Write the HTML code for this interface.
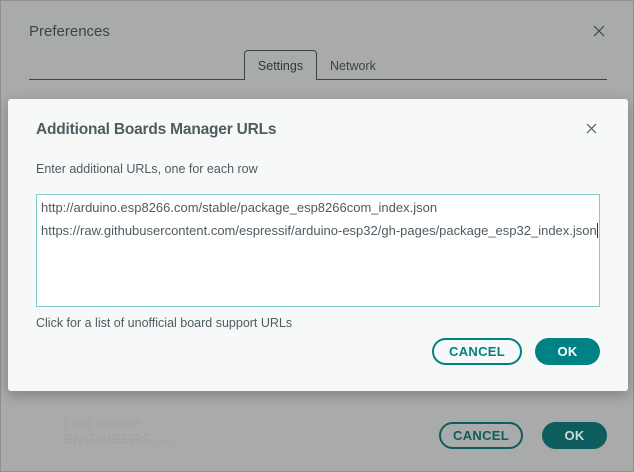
<!DOCTYPE html>
<html><head><style>
*{margin:0;padding:0;box-sizing:border-box}
body{width:634px;height:472px;background:#a9abaa;font-family:"Liberation Sans",sans-serif;position:relative;overflow:hidden;border:1px solid #8e8f8f}
.a{position:absolute}
.btn{position:absolute;border-radius:14px;font-weight:bold;font-size:13px;display:flex;align-items:center;justify-content:center;letter-spacing:.3px}
</style></head><body>
<div class="a" style="left:28px;top:22px;font-size:15px;color:#3b4546">Preferences</div>
<svg class="a" style="left:592px;top:24px" width="12" height="12"><path d="M1 1L11 11M11 1L1 11" stroke="#3b4546" stroke-width="1.2"/></svg>
<div class="a" style="left:28px;top:78px;width:578px;height:1px;background:#3b4546"></div>
<div class="a" style="left:243px;top:49px;width:73px;height:30px;border:1px solid #3b4546;border-bottom:none;border-radius:4px 4px 0 0;background:#a9abaa;font-size:12.5px;color:#2f3a3b;text-align:center;padding-top:8px">Settings</div>
<div class="a" style="left:329px;top:58px;font-size:12.5px;color:#3b4546">Network</div>
<div class="a" style="left:62px;top:415px;font-size:15px;color:#a2a5a4;font-style:italic;line-height:16px">Last Minute<br><b>ENGINEERS</b><span style="font-size:10px">.com</span></div>
<div class="btn" style="left:438px;top:421px;width:84px;height:27px;border:2px solid #0e5c5e;color:#0e5c5e">CANCEL</div>
<div class="btn" style="left:541px;top:421px;width:65px;height:27px;background:#0e5c5e;color:#c8dede">OK</div>

<div class="a" style="left:7px;top:98px;width:620px;height:292px;background:#f7f9f9;border-radius:3px;box-shadow:0 4px 14px rgba(0,0,0,.25)">
<div class="a" style="left:28px;top:22px;font-size:15.5px;color:#4e5b61;font-weight:bold;letter-spacing:-.2px">Additional Boards Manager URLs</div>
<svg class="a" style="left:578px;top:24px" width="11" height="11"><path d="M1 1L10 10M10 1L1 10" stroke="#4e5b61" stroke-width="1.2"/></svg>
<div class="a" style="left:28px;top:63px;font-size:12.5px;color:#4e5b61">Enter additional URLs, one for each row</div>
<div class="a" style="left:28px;top:95px;width:564px;height:113px;background:#fff;border:1px solid #7fcbcd;font-size:13px;color:#4e5b61;padding:1px 4px;line-height:23px;white-space:nowrap">http://arduino.esp8266.com/stable/package_esp8266com_index.json<br>https://raw.githubusercontent.com/espressif/arduino-esp32/gh-pages/package_esp32_index.json<span style="border-left:1px solid #333"></span></div>
<div class="a" style="left:28px;top:217px;font-size:12.5px;color:#4e5b61">Click for a list of unofficial board support URLs</div>
<div class="btn" style="left:424px;top:239px;width:90px;height:27px;border:2px solid #008184;color:#008184">CANCEL</div>
<div class="btn" style="left:527px;top:239px;width:65px;height:27px;background:#008184;color:#fff">OK</div>
</div>
</body></html>
